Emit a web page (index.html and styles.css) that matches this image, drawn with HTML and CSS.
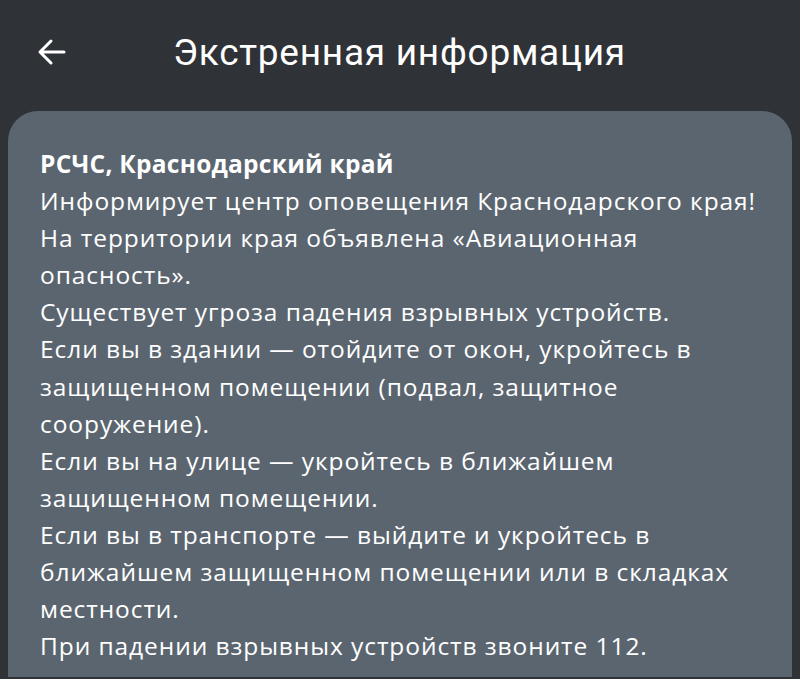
FILE: index.html
```html
<!DOCTYPE html>
<html lang="ru">
<head>
<meta charset="utf-8">
<link rel="stylesheet" href="styles.css">
</head>
<body>
<header class="topbar">
  <button class="back" aria-label="Назад">
    <svg width="32" height="32" viewBox="0 0 32 32"><path d="M28 16H5M15 5L4 16l11 11" fill="none" stroke="#fff" stroke-width="3" stroke-linecap="round" stroke-linejoin="round"/></svg>
  </button>
  <h1 class="title">Экстренная информация</h1>
</header>
<main class="card">
  <p class="source">РСЧС, Краснодарский край</p>
  <p class="msg">Информирует центр оповещения Краснодарского края!<br>На территории края объявлена «Авиационная опасность».<br>Существует угроза падения взрывных устройств.<br>Если вы в здании — отойдите от окон, укройтесь в защищенном помещении (подвал, защитное сооружение).<br>Если вы на улице — укройтесь в ближайшем защищенном помещении.<br>Если вы в транспорте — выйдите и укройтесь в ближайшем защищенном помещении или в складках местности.<br>При падении взрывных устройств звоните 112.</p>
</main>
</body>
</html>
```
FILE: styles.css
```css
html, body { margin: 0; padding: 0; }
body {
  background: #2f3237;
  width: 800px;
  height: 679px;
  overflow: hidden;
  color: #fff;
}
.topbar {
  display: flex;
  align-items: center;
  height: 104px;
  padding: 0 0 0 36px;
  box-sizing: border-box;
}
.back {
  background: none;
  border: 0;
  padding: 0;
  width: 32px;
  height: 32px;
  display: flex;
}
.title {
  margin: 0 0 0 105px;
  font-family: Roboto, sans-serif;
  font-weight: 400;
  font-size: 37px;
  letter-spacing: 0.75px;
  color: #fff;
}
.card {
  margin: 7px 8px 0 8px;
  background: #5b6570;
  border-radius: 30px 30px 0 0;
  padding: 34px 30px 13px 32px;
  font-family: "Open Sans", sans-serif;
  font-size: 24.5px;
  line-height: 37.1px;
  letter-spacing: 0.92px;
  color: #fff;
}
.card p { margin: 0; }
.source { font-weight: 700; letter-spacing: 0.25px; }
```
